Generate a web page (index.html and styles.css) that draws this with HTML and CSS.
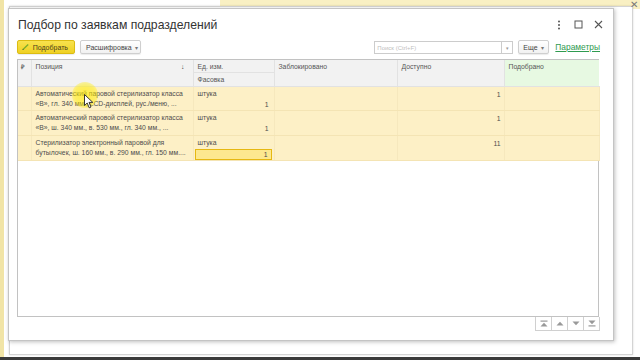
FILE: index.html
```html
<!DOCTYPE html>
<html>
  <head>
    <link rel="stylesheet" href="styles.css">
  </head>
  <body>
    <!-- фон: окна позади диалога -->
    <div class="top-strip"></div>
    <div class="left-strip"></div>
    <div class="back-window">
      <span class="back-close">&#x2715;</span>
    </div>
    <span class="strip-close">&#x2715;</span>
    <div class="taskbar"></div>

    <!-- Диалог подбора -->
    <div class="dialog">
      <div class="dialog-head">
        <div class="dialog-title">Подбор по заявкам подразделений</div>
        <div class="head-icons">
          <span class="head-icon">
            <svg width="4" height="10" viewBox="0 0 4 10"><circle cx="2" cy="1.5" r="1" fill="#555"/><circle cx="2" cy="5" r="1" fill="#555"/><circle cx="2" cy="8.5" r="1" fill="#555"/></svg>
          </span>
          <span class="head-icon">
            <svg width="9" height="9" viewBox="0 0 9 9"><rect x="1" y="1" width="7" height="7" fill="none" stroke="#555" stroke-width="1"/></svg>
          </span>
          <span class="head-icon">
            <svg width="9" height="9" viewBox="0 0 9 9"><path d="M1 1 L8 8 M8 1 L1 8" stroke="#555" stroke-width="1.1"/></svg>
          </span>
        </div>
      </div>

      <div class="toolbar">
        <button class="btn btn-main">
          <svg width="9" height="8" viewBox="0 0 9 8"><path d="M0.6 7.4 L1 5.9 L6.6 0.6 L7.8 1.8 L2.2 7 Z" fill="#79ad2c"/><path d="M0.6 7.4 L1 5.9 L2.2 7 Z" fill="#3a3a3a"/></svg>
          Подобрать
        </button>
        <button class="btn btn-plain">Расшифровка <span class="caret">&#9662;</span></button>
        <div class="spacer"></div>
        <div class="search">
          <div class="search-input">Поиск (Ctrl+F)</div>
          <div class="search-drop">&#9662;</div>
        </div>
        <button class="btn btn-more">Еще <span class="caret">&#9662;</span></button>
        <a class="params">Параметры</a>
      </div>

      <div class="grid-box">
        <table class="grid">
          <colgroup>
            <col style="width:13px">
            <col style="width:162px">
            <col style="width:81px">
            <col style="width:123px">
            <col style="width:107px">
            <col style="width:95px">
          </colgroup>
          <thead>
            <tr class="h1">
              <th rowspan="2" class="mark">&#8381;</th>
              <th rowspan="2">Позиция <span class="sort">&#8595;</span></th>
              <th>Ед. изм.</th>
              <th rowspan="2">Заблокировано</th>
              <th rowspan="2">Доступно</th>
              <th rowspan="2" class="picked">Подобрано</th>
            </tr>
            <tr class="h2">
              <th>Фасовка</th>
            </tr>
          </thead>
          <tbody>
            <tr>
              <td></td>
              <td class="name">Автоматический паровой стерилизатор класса «В», гл. 340 мм., LCD-дисплей, рус./меню, ...</td>
              <td class="unit"><div>штука</div><div class="pack">1</div></td>
              <td></td>
              <td class="num">1</td>
              <td></td>
            </tr>
            <tr>
              <td></td>
              <td class="name">Автоматический паровой стерилизатор класса «В», ш. 340 мм., в. 530 мм., гл. 340 мм., ...</td>
              <td class="unit"><div>штука</div><div class="pack">1</div></td>
              <td></td>
              <td class="num">1</td>
              <td></td>
            </tr>
            <tr>
              <td></td>
              <td class="name">Стерилизатор электронный паровой для бутылочек, ш. 160 мм., в. 290 мм., гл. 150 мм....</td>
              <td class="unit"><div>штука</div><div class="pack edit">1</div></td>
              <td></td>
              <td class="num">11</td>
              <td></td>
            </tr>
          </tbody>
        </table>
      </div>

      <div class="scroll-bar">
        <span class="sbtn"><svg width="8" height="7" viewBox="0 0 8 7"><rect x="0.5" y="0.5" width="7" height="1.2" fill="#999"/><path d="M0.5 6.5 L4 2.8 L7.5 6.5 Z" fill="#999"/></svg></span>
        <span class="sbtn"><svg width="8" height="7" viewBox="0 0 8 7"><path d="M0.5 5.5 L4 1.8 L7.5 5.5 Z" fill="#999"/></svg></span>
        <span class="sbtn"><svg width="8" height="7" viewBox="0 0 8 7"><path d="M0.5 1.5 L4 5.2 L7.5 1.5 Z" fill="#999"/></svg></span>
        <span class="sbtn"><svg width="8" height="7" viewBox="0 0 8 7"><path d="M0.5 0.5 L4 4.2 L7.5 0.5 Z" fill="#999"/><rect x="0.5" y="5.3" width="7" height="1.2" fill="#999"/></svg></span>
      </div>
    </div>

    <!-- подсветка курсора мыши -->
    <div class="cursor-glow"></div>
    <svg class="cursor" width="10" height="15" viewBox="0 0 10 15"><path d="M0.5 0.5 L0.5 11.5 L3.2 9 L5.2 13.8 L7 13 L5 8.4 L8.8 8.4 Z" fill="#fff" stroke="#222" stroke-width="0.9"/></svg>
  </body>
</html>
```

FILE: styles.css
```css
body {
  margin: 0;
  width: 640px;
  height: 360px;
  overflow: hidden;
  background: #ffffff;
  font-family: "Liberation Sans", Arial, sans-serif;
  position: relative;
}

/* окна позади диалога */
.top-strip {
  position: absolute;
  left: 220px;
  top: 0;
  width: 420px;
  height: 9px;
  background: #f9f0c3;
}

.left-strip {
  position: absolute;
  left: 0;
  top: 0;
  width: 4px;
  height: 357px;
  background: #f1e4a6;
}

.back-window {
  position: absolute;
  left: 9px;
  top: 6px;
  width: 622px;
  height: 347px;
  background: #ffffff;
  border: 1px solid #d4d4d4;
  box-shadow: 0 0 2px rgba(0, 0, 0, 0.15);
}

.back-close {
  position: absolute;
  right: 20px;
  top: 4px;
  font-size: 10px;
  color: #666;
}

.strip-close {
  position: absolute;
  right: 2px;
  top: -1px;
  font-size: 10px;
  color: #777;
}

.taskbar {
  position: absolute;
  left: 0;
  bottom: 0;
  width: 640px;
  height: 3px;
  background: #3a3a3a;
}

/* диалог */
.dialog {
  position: absolute;
  left: 8px;
  top: 8px;
  width: 582px;
  height: 331px;
  padding: 0 14px 0 8px;
  background: #ffffff;
  border: 1px solid #c4c4c4;
  box-shadow: 1px 1px 4px rgba(0, 0, 0, 0.25);
  display: flex;
  flex-direction: column;
}

.dialog-head {
  height: 31px;
  display: flex;
  align-items: center;
  padding-left: 1px;
}

.dialog-title {
  flex: 1;
  font-size: 12.2px;
  color: #333;
}

.head-icons {
  display: flex;
  align-items: center;
  gap: 11px;
  margin-right: -4px;
}

.head-icon {
  width: 9px;
  display: flex;
  justify-content: center;
}

.toolbar {
  height: 14px;
  display: flex;
  align-items: center;
  gap: 5px;
}

.btn {
  height: 14px;
  padding: 0 6px;
  font-family: "Liberation Sans", Arial, sans-serif;
  font-size: 7px;
  color: #444;
  background: linear-gradient(#ffffff, #f1f1f1);
  border: 1px solid #cfcfcf;
  border-radius: 2px;
  display: flex;
  align-items: center;
  gap: 3px;
  box-shadow: 0 1px 1px rgba(0, 0, 0, 0.08);
}

.btn-main {
  width: 58px;
  padding-left: 4px;
  background: linear-gradient(#f8e24e, #efd124);
  border-color: #dcbc12;
  color: #4a4020;
}

.btn-plain {
  width: 61px;
  padding: 0 5px;
}

.caret {
  font-size: 6px;
  color: #777;
}

.spacer {
  flex: 1;
}

.search {
  display: flex;
  height: 13px;
}

.search-input {
  width: 127px;
  padding-left: 2px;
  font-size: 6px;
  line-height: 13px;
  color: #c0c0c0;
  border: 1px solid #cccccc;
  border-right: none;
  box-sizing: border-box;
}

.search-drop {
  width: 12px;
  font-size: 5px;
  line-height: 13px;
  text-align: center;
  color: #999;
  border: 1px solid #cccccc;
  box-sizing: border-box;
}

.btn-more {
  width: 31px;
  padding: 0 4px;
}

.params {
  font-size: 8.4px;
  color: #2f9a4f;
  text-decoration: underline;
  margin-left: 1px;
  margin-right: -1px;
}

/* таблица */
.grid-box {
  margin-top: 5px;
  height: 256px;
  border: 1px solid #c2c2c2;
  background: #ffffff;
}

.grid {
  border-collapse: collapse;
  table-layout: fixed;
  width: 581px;
  font-size: 6.8px;
  color: #4d4d4d;
}

.grid th {
  background: #f2f2f2;
  font-weight: normal;
  text-align: left;
  vertical-align: top;
  padding: 3px 4px 0;
  border-right: 1px solid #e2e2e2;
  border-bottom: 1px solid #e2e2e2;
  white-space: nowrap;
  overflow: hidden;
  line-height: 8px;
  color: #555;
}

.h1 th {
  height: 9px;
}

.h2 th {
  height: 10px;
}

.grid th.mark {
  padding: 3px 0 0 3px;
  font-weight: bold;
  font-size: 6px;
  color: #666;
}

.sort {
  float: right;
  margin-right: 4px;
  color: #444;
}

.grid th.picked {
  background: #e7f9e2;
  border-right: none;
}

.grid tbody tr {
  height: 25px;
}

.grid tbody tr:first-child {
  height: 24px;
}

.grid td {
  background: #fdf0c6;
  padding: 0;
  vertical-align: top;
  border-right: 1px solid #f6e8bd;
  border-bottom: 1px solid #f4e4b4;
  color: #4d4d4d;
}

.grid td.name {
  padding: 2px 4px 0 4px;
  line-height: 9.5px;
}

.grid td.unit {
  padding: 2px 2px 0 1px;
  line-height: 9.5px;
}

.unit div {
  padding-left: 3px;
}

.pack {
  text-align: right;
  padding-right: 3px;
  margin-top: 1px;
  height: 10px;
}

.pack.edit {
  background: #fde88f;
  border: 1px solid #e6b812;
  line-height: 9px;
  height: 9px;
  margin-top: 1px;
}

.grid td.num {
  text-align: right;
  padding: 4px 3px 0 0;
  line-height: 8px;
}

.scroll-bar {
  display: flex;
  justify-content: flex-end;
  margin-right: -1px;
}

.sbtn {
  width: 15px;
  height: 13px;
  border: 1px solid #d0d0d0;
  border-top: none;
  margin-left: -1px;
  display: flex;
  align-items: center;
  justify-content: center;
}

/* курсор */
.cursor-glow {
  position: absolute;
  left: 72px;
  top: 82px;
  width: 26px;
  height: 26px;
  border-radius: 50%;
  background: radial-gradient(circle, rgba(255, 236, 0, 0.65) 0%, rgba(255, 236, 0, 0.5) 55%, rgba(255, 236, 0, 0) 100%);
}

.cursor {
  position: absolute;
  left: 84px;
  top: 94px;
}
```
